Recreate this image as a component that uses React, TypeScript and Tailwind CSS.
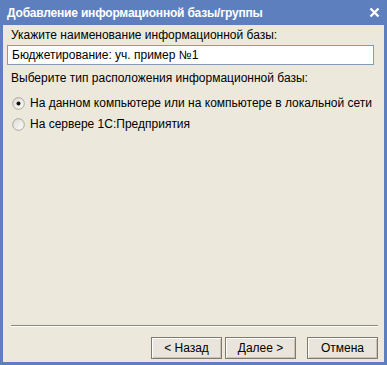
import React from "react";

function Radio({ checked }: { checked?: boolean }) {
  return (
    <svg width="13" height="13" viewBox="0 0 13 13" className="shrink-0">
      <defs>
        <linearGradient id="rg" x1="0" y1="0" x2="1" y2="1">
          <stop offset="0" stopColor="#dcd9cf" />
          <stop offset="1" stopColor="#ffffff" />
        </linearGradient>
      </defs>
      <circle cx="6.5" cy="6.5" r="5.8" fill="url(#rg)" stroke="#a09e97" strokeWidth="0.9" />
      {checked && <circle cx="6.5" cy="6.5" r="2" fill="#111" />}
    </svg>
  );
}

function Btn({ children }: { children: React.ReactNode }) {
  return (
    <button className="h-[22px] w-[71px] border border-[#807a6d] bg-[#e9e5dc] shadow-[inset_1px_1px_0_#fff,inset_-1px_-1px_0_#c9c3b6] text-[12px] text-black flex items-center justify-center">
      {children}
    </button>
  );
}

export default function App() {
  return (
    <div
      className="w-[387px] h-[365px] bg-[#5e7fbd] flex flex-col"
      style={{ fontFamily: '"Liberation Sans", Arial, sans-serif' }}
    >
      <div className="h-[25px] shrink-0 flex items-center justify-between pl-[7px] pr-[7px]">
        <span className="text-white font-bold text-[12px] tracking-[-0.2px]">
          Добавление информационной базы/группы
        </span>
        <svg width="11" height="11" viewBox="0 0 11 11">
          <path d="M1.5 1.5 L9.5 9.5 M9.5 1.5 L1.5 9.5" stroke="#fff" strokeWidth="2.4" />
        </svg>
      </div>
      <div className="flex-1 mx-[3px] mb-[3px] bg-[#ece9dc] flex flex-col px-[4px] text-[12px] text-black">
        <div className="pt-[3px] pl-[4px] leading-[15px]">Укажите наименование информационной базы:</div>
        <div className="mt-[2px] h-[20px] mr-[6px] border border-[#7f9db9] bg-white flex items-center pl-[4px]">
          Бюджетирование: уч. пример №1
        </div>
        <div className="mt-[6px] pl-[4px] leading-[15px]">Выберите тип расположения информационной базы:</div>
        <div className="mt-[8px] pl-[5px] flex items-center gap-[5px] h-[18px]">
          <Radio checked />
          <span>На данном компьютере или на компьютере в локальной сети</span>
        </div>
        <div className="mt-[3px] pl-[5px] flex items-center gap-[5px] h-[18px]">
          <Radio />
          <span>На сервере 1С:Предприятия</span>
        </div>
        <div className="flex-1" />
        <div className="mx-[4px] mr-[2px] h-[2px] border-t border-[#8c877b] border-b border-b-white" />
        <div className="flex justify-end gap-[3px] pr-[2px] pt-[10px] pb-[3px]">
          <Btn>&lt; Назад</Btn>
          <Btn>Далее &gt;</Btn>
          <div className="w-[5px]" />
          <Btn>Отмена</Btn>
        </div>
      </div>
    </div>
  );
}
